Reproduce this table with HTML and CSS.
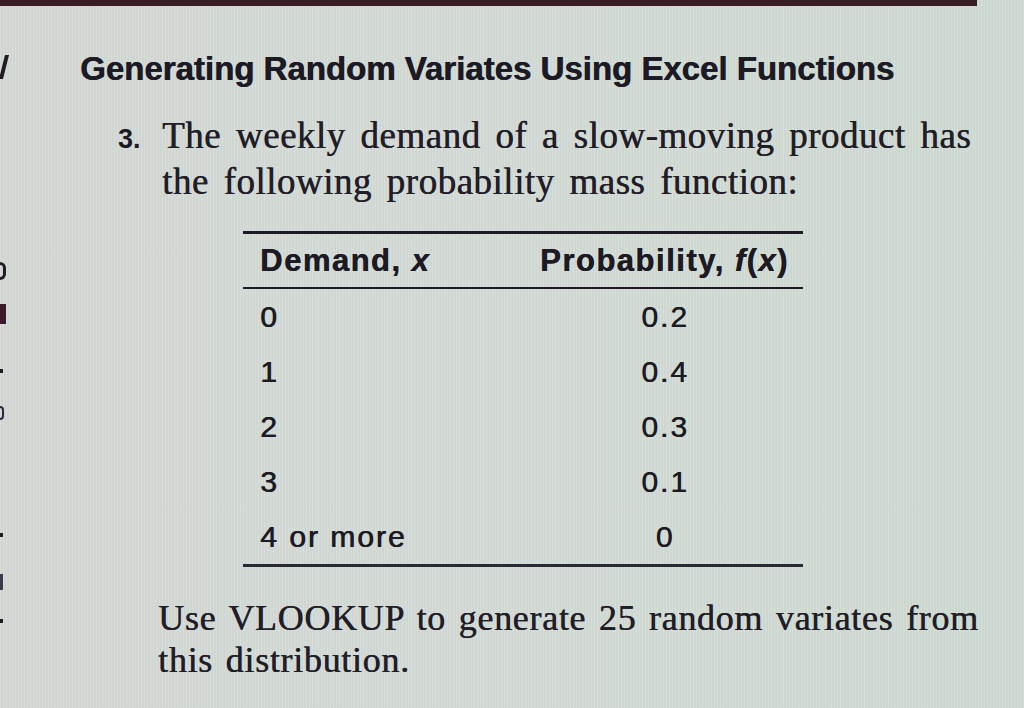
FILE: index.html
```html
<!DOCTYPE html>
<html lang="en">
<head>
<meta charset="utf-8">
<title>Generating Random Variates Using Excel Functions</title>
<link rel="stylesheet" href="styles.css">
</head>
<body>
<div class="page">
  <div class="topbar"></div>
  <div class="edge" aria-hidden="true">
    <div class="mark m7"></div>
    <div class="mark mD"></div>
    <div class="mark mblock"></div>
    <div class="mark mdot d1"></div>
    <div class="mark me"></div>
    <div class="mark mdot d2"></div>
    <div class="mark ml"></div>
    <div class="mark mdot d3"></div>
  </div>
  <main class="content">
    <h1 class="title">Generating Random Variates Using Excel Functions</h1>
    <div class="problem">
      <span class="num">3.</span>
      <p class="stem">The weekly demand of a slow-moving product has the following probability mass function:</p>
    </div>
    <div class="pmf">
      <div class="pmf-head">
        <div class="cell h1c">Demand, <i>x</i></div>
        <div class="cell h2c">Probability, <i>f</i>(<i>x</i>)</div>
      </div>
      <div class="pmf-body">
        <div class="row"><div class="cell c1">0</div><div class="cell c2">0.2</div></div>
        <div class="row"><div class="cell c1">1</div><div class="cell c2">0.4</div></div>
        <div class="row"><div class="cell c1">2</div><div class="cell c2">0.3</div></div>
        <div class="row"><div class="cell c1">3</div><div class="cell c2">0.1</div></div>
        <div class="row"><div class="cell c1">4 or more</div><div class="cell c2">0</div></div>
      </div>
    </div>
    <p class="task">Use VLOOKUP to generate 25 random variates from this distribution.</p>
  </main>
</div>
</body>
</html>
```
FILE: styles.css
```css
html, body {
  margin: 0;
  padding: 0;
}
body {
  width: 1024px;
  height: 708px;
  overflow: hidden;
  background-color: #d2d9d4;
  background-image:
    repeating-linear-gradient(90deg, rgba(255,255,255,0.10) 0px, rgba(255,255,255,0.10) 1px, rgba(0,0,0,0.035) 2px, rgba(0,0,0,0) 3px),
    linear-gradient(90deg, #d3d8d5 0%, #d3dad5 50%, #cddad1 100%);
  color: #1c1a22;
}
.page {
  position: relative;
  width: 1024px;
  height: 708px;
}
.topbar {
  width: 977px;
  height: 6px;
  background: #3a1c25;
}

/* cut-off marks of the facing page at the left edge */
.mark {
  position: absolute;
  left: 0;
  background: #1f1c24;
}
.m7 {
  top: 55px;
  width: 4px;
  height: 24px;
  transform: skewX(-14deg);
  left: 2px;
}
.mD {
  top: 262px;
  width: 6px;
  height: 18px;
  background: transparent;
  border: 3px solid #1f1c24;
  border-left: none;
  border-radius: 0 9px 9px 0;
  box-sizing: border-box;
}
.mblock { top: 304px; width: 6px; height: 20px; background: #3c1a2c; }
.mdot { width: 3px; height: 4px; }
.d1 { top: 369px; }
.d2 { top: 533px; }
.d3 { top: 619px; }
.me {
  top: 406px;
  width: 4px;
  height: 14px;
  background: transparent;
  border: 2px solid #2a2a3a;
  border-left: none;
  border-radius: 0 6px 6px 0;
  box-sizing: border-box;
}
.ml { top: 574px; width: 3px; height: 16px; background: #3a3a48; }

.content {
  padding: 0 40px 0 80px;
}
.title {
  margin: 43px 0 0 0;
  font-family: "Liberation Sans", Arial, sans-serif;
  font-weight: bold;
  font-size: 33px;
  line-height: 40px;
  letter-spacing: 0;
  color: #1c1a24;
  text-shadow: 0.6px 0 0 #1c1a24;
  white-space: nowrap;
}
.problem {
  display: flex;
  align-items: baseline;
  margin: 24px 0 0 38px;
}
.num {
  font-family: "Liberation Sans", Arial, sans-serif;
  font-weight: bold;
  font-size: 27px;
  width: 44px;
  flex: none;
}
.stem {
  margin: 0;
  width: 835px;
  font-family: "Liberation Serif", "Times New Roman", serif;
  font-size: 37px;
  line-height: 46px;
  letter-spacing: 0.5px;
  word-spacing: 5px;
  color: #221e28;
  text-shadow: 0.5px 0 0 #221e28;
}
.pmf {
  width: 560px;
  margin: 26px 0 0 163px;
  font-family: "Liberation Sans", Arial, sans-serif;
  font-size: 30px;
  color: #1c1a22;
}
.pmf-head {
  display: grid;
  grid-template-columns: 280px 280px;
  height: 53px;
  align-items: center;
  border-top: 3px solid #1d1c24;
  border-bottom: 2px solid #1d1c24;
  font-weight: bold;
  font-size: 31px;
  letter-spacing: 1.5px;
  text-shadow: 0.5px 0 0 #1c1a22;
}
.pmf-head .h2c {
  white-space: nowrap;
}
.pmf-body {
  border-bottom: 3px solid #2a2a34;
}
.row {
  display: grid;
  grid-template-columns: 280px 280px;
  height: 55px;
  align-items: center;
  letter-spacing: 2px;
  text-shadow: 0.7px 0 0 #1c1a22;
}
.cell.h1c, .cell.c1 {
  padding-left: 17px;
}
.cell.h2c {
  padding-left: 17px;
}
.cell.c2 {
  text-align: center;
  padding-left: 4px;
}
.task {
  margin: 30px 0 0 78px;
  width: 840px;
  font-family: "Liberation Serif", "Times New Roman", serif;
  font-size: 36px;
  line-height: 42px;
  letter-spacing: 0.7px;
  word-spacing: 3px;
  color: #221e28;
  text-shadow: 0.5px 0 0 #221e28;
}
```
